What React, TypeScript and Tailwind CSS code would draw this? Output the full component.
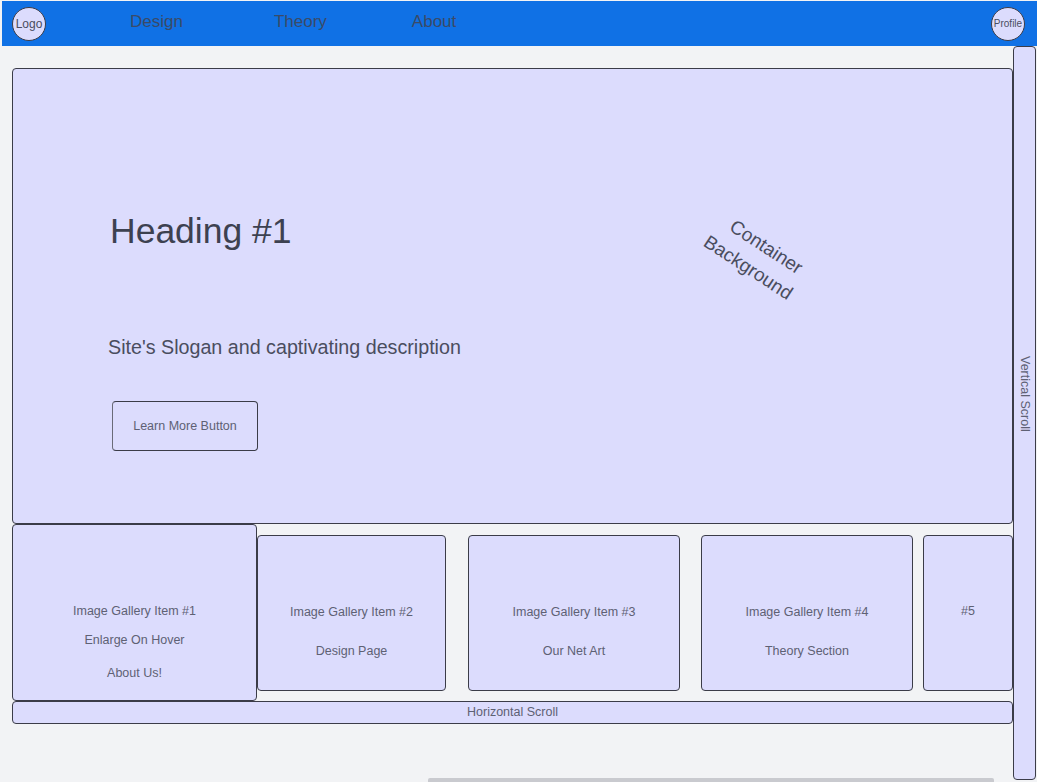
import React from "react";

const box = "bg-[#dcdcfd] border border-[#3b3c48] rounded-[4px]";
const small = "text-[12.5px] leading-[15px] text-[#5e6174]";

const GalleryItem = ({ lines, className, gaps }: { lines: string[]; className: string; gaps: string[] }) => {
  return (
    <div className={`${box} ${className} flex flex-col items-center`}>
      {lines.map((l, i) => (
        <span key={l} className={`${small} ${gaps[i]}`}>
          {l}
        </span>
      ))}
    </div>
  );
};

export default function App() {
  return (
    <div className="relative w-[1037px] h-[782px] overflow-hidden bg-[#f2f3f5] font-['Liberation_Sans',Arial,sans-serif]">
      <header className="h-[45px] mt-[1px] ml-[2px] bg-[#1071e5] flex items-center">
        <div className="ml-[10px] w-[34px] h-[34px] rounded-full bg-[#dcdcfd] border border-[#3b3c48] flex items-center justify-center text-[12px] text-[#4a4d60]">
          Logo
        </div>
        <nav className="flex items-center pb-[3px] text-[17px] text-[#3a4a68]">
          <span className="ml-[84px]">Design</span>
          <span className="ml-[91px]">Theory</span>
          <span className="ml-[85px]">About</span>
        </nav>
        <div className="ml-auto mr-[12px] w-[34px] h-[34px] rounded-full bg-[#dcdcfd] border border-[#3b3c48] flex items-center justify-center text-[10px] text-[#4a4d60]">
          Profile
        </div>
      </header>

      <div className="flex">
        <main className="pl-[12px] pt-[22px] w-[1013px]">
          <section className={`${box} relative h-[456px] pl-[97px] pt-[142px]`}>
            <h1 className="text-[35.5px] leading-[40px] text-[#3d4150]">Heading #1</h1>
            <p className="mt-[84px] -ml-[2px] text-[19.7px] leading-[24px] text-[#4a4d5e]">
              Site's Slogan and captivating description
            </p>
            <button className="mt-[42px] ml-[2px] w-[146px] h-[50px] rounded-[4px] border border-[#3b3c48] border-l-[#6a6b78] text-[12.5px] text-[#5e6174]">
              Learn More Button
            </button>
            <div className="absolute left-[692px] top-[160px] rotate-[33deg] flex flex-col items-center text-[19px] leading-[27px] text-[#4a4d5e]">
              <span className="ml-[8px]">Container</span>
              <span>Background</span>
            </div>
          </section>

          <div className="flex items-center h-[177px]">
            <GalleryItem
              className="w-[245px] h-[177px] pt-[79px]"
              gaps={["", "mt-[14px]", "mt-[18px]"]}
              lines={["Image Gallery Item #1", "Enlarge On Hover", "About Us!"]}
            />
            <GalleryItem
              className="w-[189px] h-[156px] pt-[69px]"
              gaps={["", "mt-[24px]"]}
              lines={["Image Gallery Item #2", "Design Page"]}
            />
            <GalleryItem
              className="ml-[22px] w-[212px] h-[156px] pt-[69px]"
              gaps={["", "mt-[24px]"]}
              lines={["Image Gallery Item #3", "Our Net Art"]}
            />
            <GalleryItem
              className="ml-[21px] w-[212px] h-[156px] pt-[69px]"
              gaps={["", "mt-[24px]"]}
              lines={["Image Gallery Item #4", "Theory Section"]}
            />
            <div className={`${box} ml-[10px] w-[90px] h-[156px] flex items-center justify-center pb-[2px]`}>
              <span className={small}>#5</span>
            </div>
          </div>

          <div className={`${box} h-[23px] flex items-center justify-center`}>
            <span className={small}>Horizontal Scroll</span>
          </div>
        </main>

        <aside className="w-[23px] h-[734px] bg-[#dcdcfd] border border-[#3b3c48] rounded-[4px] flex flex-col items-center pt-[309px]">
          <span className={`${small} [writing-mode:vertical-rl]`}>Vertical Scroll</span>
        </aside>
      </div>

      <div className="absolute left-[428px] bottom-0 w-[566px] h-[4px] rounded-t-[2px] bg-[#c9cacf]" />
    </div>
  );
}
